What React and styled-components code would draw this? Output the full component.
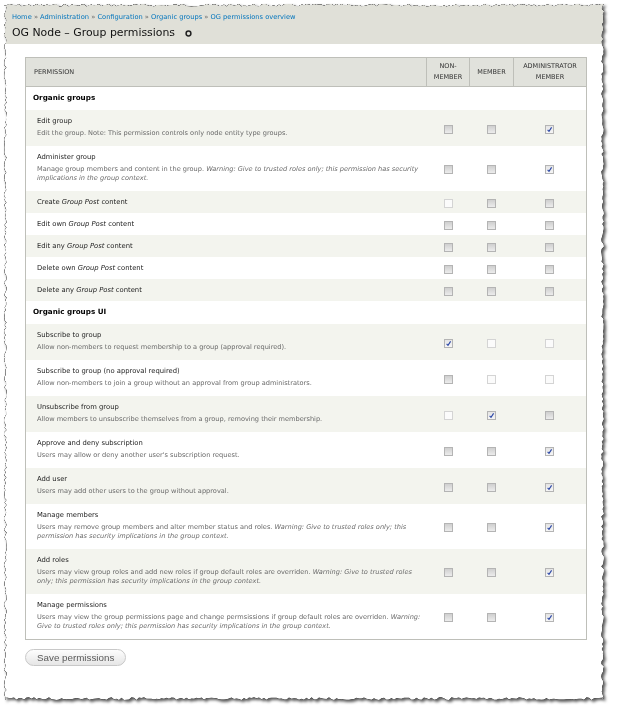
import React, { useMemo } from 'react'
import styled, { createGlobalStyle } from 'styled-components'

const GlobalStyles = createGlobalStyle`
  html, body {
    margin: 0;
    padding: 0;
    background: #fff;
  }
  body {
    font-family: "DejaVu Sans", Verdana, sans-serif;
    color: #333;
  }
`

const Wrapper = styled.div`
  width: 620px;
  height: 712px;
  padding: 4px 0 0 4px;
  box-sizing: border-box;
`
const Shadow = styled.div`
  width: 600px;
  height: 696px;
  filter: drop-shadow(0 0 0.7px rgba(0, 0, 0, 1)) drop-shadow(0 0 0.5px rgba(0, 0, 0, 1))
    drop-shadow(2px 2px 1.5px rgba(0, 0, 0, 0.65));
`
const Page = styled.div`
  width: 600px;
  height: 696px;
  background: #fff;
  overflow: hidden;
`
const Header = styled.div`
  background: #e0e0d8;
  padding: 9px 8px 4px;
`
const Breadcrumb = styled.div`
  font-size: 6.7px;
  line-height: 9px;
  color: #666;
  a {
    color: #0074bd;
    text-decoration: none;
  }
`
const TitleRow = styled.h1`
  display: flex;
  align-items: center;
  gap: 10px;
  margin: 4px 0 0;
  font-size: 10.9px;
  line-height: 14px;
  font-weight: normal;
  color: #111;
`
const Content = styled.div`
  padding: 13px 0 0 21px;
`
const Table = styled.table`
  width: 562px;
  table-layout: fixed;
  border-collapse: collapse;
  border: 1px solid #bebfb9;
`
const HeadCell = styled.th`
  height: 28px;
  padding: 0 ${p => (p.$left ? '8px' : '0')};
  background: #e1e2dc;
  border-left: 1px solid #bebfb9;
  border-bottom: 1px solid #bebfb9;
  font-size: 6.5px;
  line-height: 11px;
  font-weight: normal;
  text-transform: uppercase;
  text-align: ${p => (p.$left ? 'left' : 'center')};
  color: #333;
`
const Row = styled.tr`
  background: ${p => (p.$shade ? '#f3f4ee' : '#fff')};
`
const SectionCell = styled.td`
  padding: 6px 7px 7px;
  font-size: 7.2px;
  line-height: 10px;
  font-weight: bold;
  color: #000;
`
const PermCell = styled.td`
  padding: 6px 0 ${p => (p.$desc ? '8px' : '6px')} 11px;
  vertical-align: middle;
`
const PermTitle = styled.div`
  font-size: 6.8px;
  line-height: 10px;
  color: #222;
  em {
    font-style: italic;
  }
`
const PermDesc = styled.div`
  margin-top: 3px;
  font-size: 6.6px;
  line-height: 9px;
  color: #6a6a6a;
  white-space: nowrap;
`
const BoxCell = styled.td`
  text-align: center;
  vertical-align: middle;
  padding: 0;
`
const Box = styled.span`
  display: inline-block;
  position: relative;
  width: 7px;
  height: 7px;
  vertical-align: middle;
  border: 1px solid ${p => (p.$state === 'light' ? '#d4d4d4' : '#b4b4b4')};
  background: ${p =>
    p.$state === 'light'
      ? '#fbfbfb'
      : p.$state === 'on'
      ? 'linear-gradient(#e4e4e4, #f6f6f6)'
      : 'linear-gradient(#cfcfcf, #ececec)'};
  svg {
    position: absolute;
    left: 0;
    top: 0;
  }
`
const SaveButton = styled.button`
  margin-top: 9px;
  height: 17px;
  padding: 0 11px;
  border: 1px solid #c8c8c8;
  border-radius: 10px;
  background: linear-gradient(#fdfdfd, #e6e6e6);
  font-family: "Liberation Sans", Arial, sans-serif;
  font-size: 9.8px;
  color: #5a5a5a;
`

function rand(seed) {
  let s = seed
  return () => {
    s = (s * 9301 + 49297) % 233280
    return s / 233280
  }
}

function tornClip(w, h) {
  const r = rand(7)
  const amp = 2.8
  const pts = []
  for (let x = 0; x < w; x += 2.5) pts.push(`${x}px ${(r() * amp).toFixed(2)}px`)
  for (let y = 0; y < h; y += 2.5) pts.push(`${(w - r() * amp).toFixed(2)}px ${y}px`)
  for (let x = w; x > 0; x -= 2.5) pts.push(`${x}px ${(h - r() * amp).toFixed(2)}px`)
  for (let y = h; y > 0; y -= 2.5) pts.push(`${(r() * amp).toFixed(2)}px ${y}px`)
  return `polygon(${pts.join(',')})`
}

const Check = ({ state }) => (
  <Box $state={state}>
    {state === 'on' && (
      <svg width="7" height="7" viewBox="0 0 7 7">
        <path d="M1.6 3.9 L3 5.4 L5.6 1.4" fill="none" stroke="#2b47a6" strokeWidth="1.1" />
      </svg>
    )}
  </Box>
)

const Ring = () => (
  <svg width="7" height="7" viewBox="0 0 7 7">
    <circle cx="3.5" cy="3.5" r="2.4" fill="none" stroke="#222" strokeWidth="1.5" />
  </svg>
)

const W = 'Warning:'
const rows = [
  { section: 'Organic groups' },
  { title: 'Edit group', desc: ['Edit the group. Note: This permission controls only node entity type groups.'], boxes: ['off', 'off', 'on'] },
  {
    title: 'Administer group',
    desc: [
      <>Manage group members and content in the group. <em>{W} Give to trusted roles only; this permission has security</em></>,
      <em>implications in the group context.</em>,
    ],
    boxes: ['off', 'off', 'on'],
  },
  { title: <>Create <em>Group Post</em> content</>, boxes: ['light', 'off', 'off'] },
  { title: <>Edit own <em>Group Post</em> content</>, boxes: ['off', 'off', 'off'] },
  { title: <>Edit any <em>Group Post</em> content</>, boxes: ['off', 'off', 'off'] },
  { title: <>Delete own <em>Group Post</em> content</>, boxes: ['off', 'off', 'off'] },
  { title: <>Delete any <em>Group Post</em> content</>, boxes: ['off', 'off', 'off'] },
  { section: 'Organic groups UI' },
  { title: 'Subscribe to group', desc: ['Allow non-members to request membership to a group (approval required).'], boxes: ['on', 'light', 'light'] },
  { title: 'Subscribe to group (no approval required)', desc: ['Allow non-members to join a group without an approval from group administrators.'], boxes: ['off', 'light', 'light'] },
  { title: 'Unsubscribe from group', desc: ['Allow members to unsubscribe themselves from a group, removing their membership.'], boxes: ['light', 'on', 'off'] },
  { title: 'Approve and deny subscription', desc: ["Users may allow or deny another user's subscription request."], boxes: ['off', 'off', 'on'] },
  { title: 'Add user', desc: ['Users may add other users to the group without approval.'], boxes: ['off', 'off', 'on'] },
  {
    title: 'Manage members',
    desc: [
      <>Users may remove group members and alter member status and roles. <em>{W} Give to trusted roles only; this</em></>,
      <em>permission has security implications in the group context.</em>,
    ],
    boxes: ['off', 'off', 'on'],
  },
  {
    title: 'Add roles',
    desc: [
      <>Users may view group roles and add new roles if group default roles are overriden. <em>{W} Give to trusted roles</em></>,
      <em>only; this permission has security implications in the group context.</em>,
    ],
    boxes: ['off', 'off', 'on'],
  },
  {
    title: 'Manage permissions',
    desc: [
      <>Users may view the group permissions page and change permsissions if group default roles are overriden. <em>{W}</em></>,
      <em>Give to trusted roles only; this permission has security implications in the group context.</em>,
    ],
    boxes: ['off', 'off', 'on'],
  },
]

export default function App() {
  const clip = useMemo(() => tornClip(600, 696), [])
  return (
    <Wrapper>
      <GlobalStyles />
      <Shadow>
        <Page style={{ clipPath: clip }}>
          <Header>
            <Breadcrumb>
              <a href="#">Home</a> » <a href="#">Administration</a> » <a href="#">Configuration</a> »{' '}
              <a href="#">Organic groups</a> » <a href="#">OG permissions overview</a>
            </Breadcrumb>
            <TitleRow>
              OG Node – Group permissions <Ring />
            </TitleRow>
          </Header>
          <Content>
            <Table>
              <colgroup>
                <col style={{ width: 401 }} />
                <col style={{ width: 43 }} />
                <col style={{ width: 44 }} />
                <col />
              </colgroup>
              <thead>
                <tr>
                  <HeadCell $left>Permission</HeadCell>
                  <HeadCell>Non-<br />member</HeadCell>
                  <HeadCell>Member</HeadCell>
                  <HeadCell>Administrator<br />member</HeadCell>
                </tr>
              </thead>
              <tbody>
                {rows.map((r, i) =>
                  r.section ? (
                    <Row key={i} $shade={i % 2 === 1}>
                      <SectionCell colSpan={4}>{r.section}</SectionCell>
                    </Row>
                  ) : (
                    <Row key={i} $shade={i % 2 === 1}>
                      <PermCell $desc={!!r.desc}>
                        <PermTitle>{r.title}</PermTitle>
                        {r.desc && (
                          <PermDesc>
                            {r.desc.map((d, j) => (
                              <div key={j}>{d}</div>
                            ))}
                          </PermDesc>
                        )}
                      </PermCell>
                      {r.boxes.map((b, j) => (
                        <BoxCell key={j}>
                          <Check state={b} />
                        </BoxCell>
                      ))}
                    </Row>
                  )
                )}
              </tbody>
            </Table>
            <SaveButton>Save permissions</SaveButton>
          </Content>
        </Page>
      </Shadow>
    </Wrapper>
  )
}
